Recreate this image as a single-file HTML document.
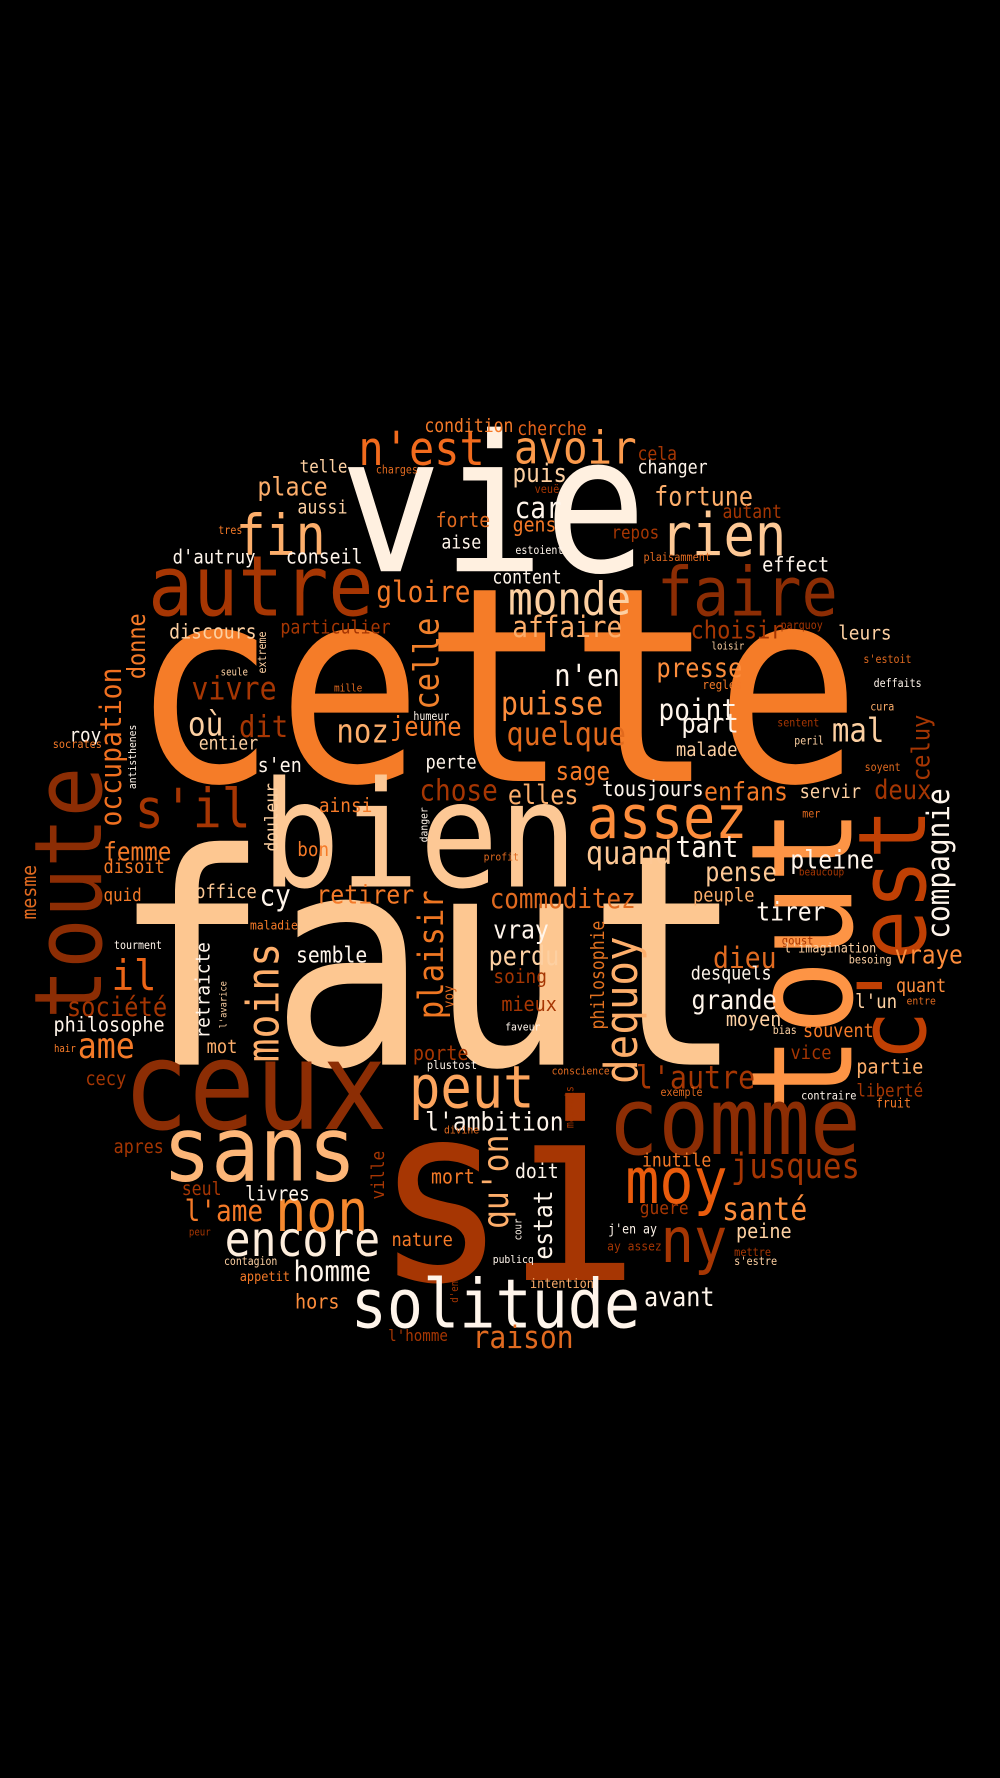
<!DOCTYPE html>
<html><head><meta charset="utf-8">
<style>
html,body{margin:0;padding:0;background:#000;width:1000px;height:1778px;overflow:hidden}
#c{position:absolute;left:0;top:0;width:882px;height:1568px;transform:scale(1.13379);transform-origin:0 0}
#c i{position:absolute;font-style:normal;white-space:pre;line-height:1;font-family:"DejaVu Sans Mono","Liberation Mono",monospace;
left:calc(var(--x)*1px - var(--f)*0.05px);top:calc(var(--b)*1px - var(--f)*0.846px);font-size:calc(var(--f)*1px);
transform-origin:0 0.846em;transform:scaleY(1.12)}
#c i.v{left:calc(var(--b)*1px - var(--f)*0.846px);top:calc(var(--x)*1px + var(--f)*0.05px);transform-origin:0 0;
transform:rotate(-90deg) translateY(0.846em) scaleY(1.12) translateY(-0.846em)}
</style></head><body><div id="c">
<i style="--x:126;--b:690;--f:214;color:#f57c28">cette</i>
<i style="--x:110;--b:939;--f:232;color:#fdc791">faut</i>
<i style="--x:340;--b:1129;--f:194;color:#a63603">si</i>
<i style="--x:307;--b:505;--f:150;color:#fff0e0">vie</i>
<i style="--x:236;--b:783;--f:116;color:#fdc895">bien</i>
<i class="v" style="--x:974;--b:752;--f:111;color:#fd9445">tout</i>
<i class="v" style="--x:932;--b:817;--f:74;color:#c04004">c'est</i>
<i class="v" style="--x:895;--b:90;--f:74;color:#8c2d04">toute</i>
<i style="--x:113;--b:996;--f:97;color:#8c2d04">ceux</i>
<i style="--x:147;--b:1041;--f:71;color:#fdb678">sans</i>
<i style="--x:540;--b:1019;--f:74;color:#8c2d04">comme</i>
<i style="--x:312;--b:1172;--f:53;color:#fff5eb">solitude</i>
<i style="--x:363;--b:977;--f:46;color:#fda55e">peut</i>
<i style="--x:200;--b:1108;--f:38;color:#feeedd">encore</i>
<i style="--x:245;--b:1086;--f:45.5;color:#f6892f">non</i>
<i style="--x:554;--b:1061;--f:50;color:#e95b0c">moy</i>
<i style="--x:585;--b:1113;--f:49;color:#a63603">ny</i>
<i style="--x:646;--b:1040;--f:27;color:#a63603">jusques</i>
<i style="--x:134;--b:544;--f:66;color:#a63603">autre</i>
<i style="--x:582;--b:544;--f:53;color:#8c2d04">faire</i>
<i style="--x:121;--b:732;--f:42.5;color:#a63603">s'il</i>
<i style="--x:318;--b:410;--f:37;color:#f26b1d">n'est</i>
<i style="--x:455;--b:410;--f:36;color:#fb9a4c">avoir</i>
<i style="--x:375;--b:382;--f:14.5;color:#f57a28">condition</i>
<i style="--x:457;--b:385;--f:14.5;color:#e2611a">cherche</i>
<i style="--x:563;--b:407;--f:14.5;color:#a63603">cela</i>
<i style="--x:563;--b:419;--f:14.7;color:#fff5eb">changer</i>
<i style="--x:265;--b:418;--f:14;color:#fdd0a2">telle</i>
<i style="--x:332;--b:419;--f:8.8;color:#e06a20">charges</i>
<i style="--x:453;--b:425;--f:20;color:#fdd0a2">puis</i>
<i style="--x:228;--b:437;--f:20.6;color:#fdae6b">place</i>
<i style="--x:578;--b:447;--f:20.7;color:#fdae6b">fortune</i>
<i style="--x:472;--b:437;--f:9;color:#a63603">veuë</i>
<i style="--x:263;--b:454;--f:14.7;color:#fdd0a2">aussi</i>
<i style="--x:455;--b:458;--f:23;color:#fff5eb">car</i>
<i style="--x:638;--b:458;--f:14.5;color:#a63603">autant</i>
<i style="--x:210;--b:490;--f:44;color:#fdae6b">fin</i>
<i style="--x:585;--b:490;--f:46;color:#fdc895">rien</i>
<i style="--x:385;--b:466;--f:16;color:#e06a20">forte</i>
<i style="--x:453;--b:470;--f:16;color:#f57a28">gens</i>
<i style="--x:193;--b:472;--f:8.8;color:#f57a28">tres</i>
<i style="--x:540;--b:476;--f:14;color:#a63603">repos</i>
<i style="--x:390;--b:485;--f:14.6;color:#fff5eb">aise</i>
<i style="--x:153;--b:498;--f:15.2;color:#fff5eb">d'autruy</i>
<i style="--x:253;--b:498;--f:16;color:#fff5eb">conseil</i>
<i style="--x:455;--b:490;--f:8.8;color:#fff5eb">estoient</i>
<i style="--x:568;--b:497;--f:9;color:#e06a20">plaisamment</i>
<i style="--x:673;--b:505;--f:16.4;color:#fff5eb">effect</i>
<i style="--x:333;--b:532;--f:23;color:#f57a28">gloire</i>
<i style="--x:435;--b:516;--f:14.5;color:#fff5eb">content</i>
<i style="--x:450;--b:543;--f:36;color:#fdd0a2">monde</i>
<i style="--x:453;--b:563;--f:23;color:#fdae6b">affaire</i>
<i style="--x:150;--b:564;--f:16;color:#fdd0a2">discours</i>
<i style="--x:248;--b:560;--f:14.7;color:#a63603">particulier</i>
<i style="--x:610;--b:563;--f:19.5;color:#a63603">choisir</i>
<i style="--x:689;--b:556;--f:8.8;color:#a63603">parquoy</i>
<i style="--x:740;--b:564;--f:15.7;color:#fdd0a2">leurs</i>
<i style="--x:628;--b:574;--f:8;color:#fdd0a2">loisir</i>
<i style="--x:580;--b:598;--f:21;color:#fd8d3c">presse</i>
<i style="--x:762;--b:586;--f:8.8;color:#e06a20">s'estoit</i>
<i style="--x:170;--b:617;--f:25;color:#a63603">vivre</i>
<i style="--x:195;--b:597;--f:8;color:#fdd0a2">seule</i>
<i style="--x:295;--b:610;--f:8.3;color:#e06a20">mille</i>
<i style="--x:620;--b:609;--f:9.7;color:#f57a28">regles</i>
<i style="--x:771;--b:607;--f:8.8;color:#fff5eb">deffaits</i>
<i style="--x:490;--b:605;--f:24;color:#fff5eb">n'en</i>
<i style="--x:443;--b:630;--f:25;color:#fd8d3c">puisse</i>
<i style="--x:582;--b:636;--f:23;color:#fff5eb">point</i>
<i style="--x:768;--b:628;--f:8.8;color:#fdae6b">cura</i>
<i style="--x:365;--b:636;--f:8.8;color:#fff5eb">humeur</i>
<i style="--x:167;--b:650;--f:26;color:#fdd0a2">où</i>
<i style="--x:212;--b:650;--f:24;color:#a63603">dit</i>
<i style="--x:298;--b:657;--f:25.6;color:#fdae6b">noz</i>
<i style="--x:345;--b:650;--f:21;color:#f57a28">jeune</i>
<i style="--x:448;--b:657;--f:25;color:#e26a1d">quelque</i>
<i style="--x:602;--b:647;--f:21;color:#fff5eb">part</i>
<i style="--x:735;--b:656;--f:25.6;color:#fdd0a2">mal</i>
<i style="--x:62;--b:655;--f:15.5;color:#fff5eb">roy</i>
<i style="--x:176;--b:662;--f:14.5;color:#fdd0a2">entier</i>
<i style="--x:47;--b:662;--f:9;color:#f57a28">socrates</i>
<i style="--x:686;--b:642;--f:8.8;color:#a63603">sentent</i>
<i style="--x:701;--b:658;--f:8.7;color:#fdd0a2">peril</i>
<i style="--x:597;--b:668;--f:15;color:#fdd0a2">malade</i>
<i style="--x:228;--b:682;--f:16.2;color:#fff5eb">s'en</i>
<i style="--x:376;--b:679;--f:15;color:#fff5eb">perte</i>
<i style="--x:491;--b:688;--f:20;color:#f57a28">sage</i>
<i style="--x:763;--b:681;--f:8.8;color:#e06a20">soyent</i>
<i style="--x:371;--b:707;--f:23;color:#a63603">chose</i>
<i style="--x:449;--b:710;--f:20.7;color:#fdae6b">elles</i>
<i style="--x:532;--b:703;--f:16.5;color:#fff5eb">tousjours</i>
<i style="--x:622;--b:706;--f:20.5;color:#f57a28">enfans</i>
<i style="--x:706;--b:705;--f:15;color:#fdd0a2">servir</i>
<i style="--x:772;--b:706;--f:21;color:#a63603">deux</i>
<i style="--x:282;--b:716;--f:15.7;color:#f57a28">ainsi</i>
<i style="--x:520;--b:740;--f:47;color:#fd8d3c">assez</i>
<i style="--x:708;--b:722;--f:8.8;color:#e06a20">mer</i>
<i style="--x:263;--b:756;--f:15.5;color:#f57a28">bon</i>
<i style="--x:92;--b:759;--f:20;color:#f57a28">femme</i>
<i style="--x:518;--b:762;--f:25.3;color:#fdc895">quand</i>
<i style="--x:597;--b:757;--f:23;color:#fff5eb">tant</i>
<i style="--x:698;--b:766;--f:20.5;color:#fff5eb">pleine</i>
<i style="--x:427;--b:760;--f:8.6;color:#e06a20">profit</i>
<i style="--x:92;--b:771;--f:15;color:#f57a28">disoit</i>
<i style="--x:623;--b:778;--f:21;color:#fdc895">pense</i>
<i style="--x:705;--b:772;--f:8.3;color:#a63603">beaucoup</i>
<i style="--x:230;--b:800;--f:23;color:#fff5eb">cy</i>
<i style="--x:280;--b:797;--f:20.5;color:#f57a28">retirer</i>
<i style="--x:433;--b:802;--f:21.4;color:#e06a20">commoditez</i>
<i style="--x:92;--b:796;--f:14;color:#f57a28">quid</i>
<i style="--x:173;--b:793;--f:15;color:#fdc895">office</i>
<i style="--x:612;--b:796;--f:15;color:#fdae6b">peuple</i>
<i style="--x:668;--b:812;--f:20.3;color:#fff5eb">tirer</i>
<i style="--x:221;--b:821;--f:10;color:#f57a28">maladie</i>
<i style="--x:436;--b:828;--f:20.4;color:#fff5eb">vray</i>
<i style="--x:690;--b:834;--f:9.3;color:#a63603">goust</i>
<i style="--x:692;--b:841;--f:10.4;color:#fdd0a2">l'imagination</i>
<i style="--x:101;--b:838;--f:8.8;color:#fff5eb">tourment</i>
<i style="--x:262;--b:851;--f:17.4;color:#fff5eb">semble</i>
<i style="--x:432;--b:852;--f:20.7;color:#fdd0a2">perdu</i>
<i style="--x:630;--b:855;--f:23.3;color:#e06a20">dieu</i>
<i style="--x:790;--b:850;--f:20;color:#fd8d3c">vraye</i>
<i style="--x:749;--b:852;--f:9;color:#fdd0a2">besoing</i>
<i style="--x:436;--b:867;--f:15.7;color:#a63603">soing</i>
<i style="--x:610;--b:866;--f:14.8;color:#fff5eb">desquels</i>
<i style="--x:791;--b:876;--f:14.7;color:#fd8d3c">quant</i>
<i style="--x:100;--b:873;--f:33;color:#ec6517">il</i>
<i style="--x:611;--b:891;--f:20.8;color:#fff5eb">grande</i>
<i style="--x:755;--b:890;--f:15.4;color:#fdd0a2">l'un</i>
<i style="--x:800;--b:887;--f:8.6;color:#e06a20">entre</i>
<i style="--x:443;--b:893;--f:16.3;color:#a63603">mieux</i>
<i style="--x:60;--b:897;--f:21;color:#a63603">société</i>
<i style="--x:641;--b:906;--f:16.3;color:#fdd0a2">moyen</i>
<i style="--x:446;--b:910;--f:8.6;color:#fff5eb">faveur</i>
<i style="--x:682;--b:913;--f:8.8;color:#fdd0a2">bias</i>
<i style="--x:48;--b:911;--f:16.3;color:#fff5eb">philosophe</i>
<i style="--x:709;--b:917;--f:14.8;color:#f57a28">souvent</i>
<i style="--x:48;--b:929;--f:8;color:#f57a28">hair</i>
<i style="--x:70;--b:934;--f:27.8;color:#f57a28">ame</i>
<i style="--x:183;--b:930;--f:15;color:#fdae6b">mot</i>
<i style="--x:365;--b:936;--f:16.3;color:#a63603">porte</i>
<i style="--x:698;--b:935;--f:15;color:#a63603">vice</i>
<i style="--x:377;--b:944;--f:9.2;color:#fff5eb">plustost</i>
<i style="--x:756;--b:948;--f:16.4;color:#fdae6b">partie</i>
<i style="--x:76;--b:958;--f:15;color:#a63603">cecy</i>
<i style="--x:487;--b:949;--f:8.5;color:#e06a20">conscience</i>
<i style="--x:562;--b:960;--f:25;color:#a63603">l'autre</i>
<i style="--x:583;--b:968;--f:8.8;color:#e06a20">exemple</i>
<i style="--x:756;--b:968;--f:14;color:#a63603">liberté</i>
<i style="--x:707;--b:972;--f:9;color:#fff5eb">contraire</i>
<i style="--x:773;--b:978;--f:10.3;color:#f57a28">fruit</i>
<i style="--x:376;--b:997;--f:20.3;color:#fff5eb">l'ambition</i>
<i style="--x:392;--b:1001;--f:8.6;color:#e06a20">divine</i>
<i style="--x:101;--b:1018;--f:14.7;color:#a63603">apres</i>
<i style="--x:567;--b:1030;--f:14.5;color:#f57a28">inutile</i>
<i style="--x:455;--b:1040;--f:16;color:#fff5eb">doit</i>
<i style="--x:381;--b:1045;--f:16;color:#f57a28">mort</i>
<i style="--x:161;--b:1055;--f:14.6;color:#a63603">seul</i>
<i style="--x:217;--b:1059;--f:15.8;color:#fff5eb">livres</i>
<i style="--x:638;--b:1076;--f:25;color:#fd8d3c">santé</i>
<i style="--x:565;--b:1072;--f:14.3;color:#a63603">guere</i>
<i style="--x:164;--b:1078;--f:23;color:#f57a28">l'ame</i>
<i style="--x:167;--b:1091;--f:8;color:#a63603">peur</i>
<i style="--x:537;--b:1090;--f:10.2;color:#fff5eb">j'en ay</i>
<i style="--x:650;--b:1093;--f:16.3;color:#fdd0a2">peine</i>
<i style="--x:346;--b:1100;--f:15;color:#f57a28">nature</i>
<i style="--x:536;--b:1104;--f:10;color:#a63603">ay assez</i>
<i style="--x:648;--b:1110;--f:9;color:#a63603">mettre</i>
<i style="--x:198;--b:1117;--f:8.7;color:#fdd0a2">contagion</i>
<i style="--x:435;--b:1115;--f:8.6;color:#fff5eb">publicq</i>
<i style="--x:648;--b:1118;--f:9;color:#fdd0a2">s'estre</i>
<i style="--x:260;--b:1131;--f:22.7;color:#fff5eb">homme</i>
<i style="--x:212;--b:1131;--f:10.5;color:#f57a28">appetit</i>
<i style="--x:468;--b:1137;--f:10.4;color:#fdae6b">intention</i>
<i style="--x:261;--b:1155;--f:16.3;color:#fd8d3c">hors</i>
<i style="--x:569;--b:1153;--f:20.7;color:#fff5eb">avant</i>
<i style="--x:343;--b:1184;--f:12.5;color:#a63603">l'homme</i>
<i style="--x:418;--b:1190;--f:24.7;color:#e06a20">raison</i>
<i class="v" style="--x:827;--b:838;--f:24.5;color:#fff5eb">compagnie</i>
<i class="v" style="--x:688;--b:820;--f:19.5;color:#a63603">celuy</i>
<i class="v" style="--x:810;--b:33;--f:16;color:#e06a20">mesme</i>
<i class="v" style="--x:728;--b:108;--f:23.3;color:#f07020">occupation</i>
<i class="v" style="--x:598;--b:128;--f:19.3;color:#f57a28">donne</i>
<i class="v" style="--x:594;--b:236;--f:8.8;color:#fdd0a2">extreme</i>
<i class="v" style="--x:696;--b:121;--f:8.6;color:#fff5eb">antisthenes</i>
<i class="v" style="--x:625;--b:388;--f:27;color:#f0802b">celle</i>
<i class="v" style="--x:750;--b:246;--f:14.3;color:#fdd0a2">douleur</i>
<i class="v" style="--x:743;--b:378;--f:8.6;color:#fff5eb">danger</i>
<i class="v" style="--x:898;--b:392;--f:27;color:#ee7622">plaisir</i>
<i class="v" style="--x:888;--b:400;--f:11;color:#e06a20">voy</i>
<i class="v" style="--x:915;--b:185;--f:15.7;color:#fff5eb">retraicte</i>
<i class="v" style="--x:907;--b:201;--f:7.7;color:#fdd0a2">l'avarice</i>
<i class="v" style="--x:935;--b:248;--f:35;color:#fdae6b">moins</i>
<i class="v" style="--x:907;--b:534;--f:14.5;color:#e07020">philosophie</i>
<i class="v" style="--x:954;--b:563;--f:36;color:#fdae6b">dequoy</i>
<i class="v" style="--x:1083;--b:448;--f:27.7;color:#fdae6b">qu'on</i>
<i class="v" style="--x:1057;--b:340;--f:14.3;color:#a63603">ville</i>
<i class="v" style="--x:1110;--b:487;--f:20.3;color:#fff5eb">estat</i>
<i class="v" style="--x:1094;--b:461;--f:8;color:#fff5eb">cour</i>
<i class="v" style="--x:995;--b:507;--f:8.8;color:#a63603">mauvais</i>
<i class="v" style="--x:1149;--b:405;--f:8;color:#a63603">d'en</i>
</div></body></html>
